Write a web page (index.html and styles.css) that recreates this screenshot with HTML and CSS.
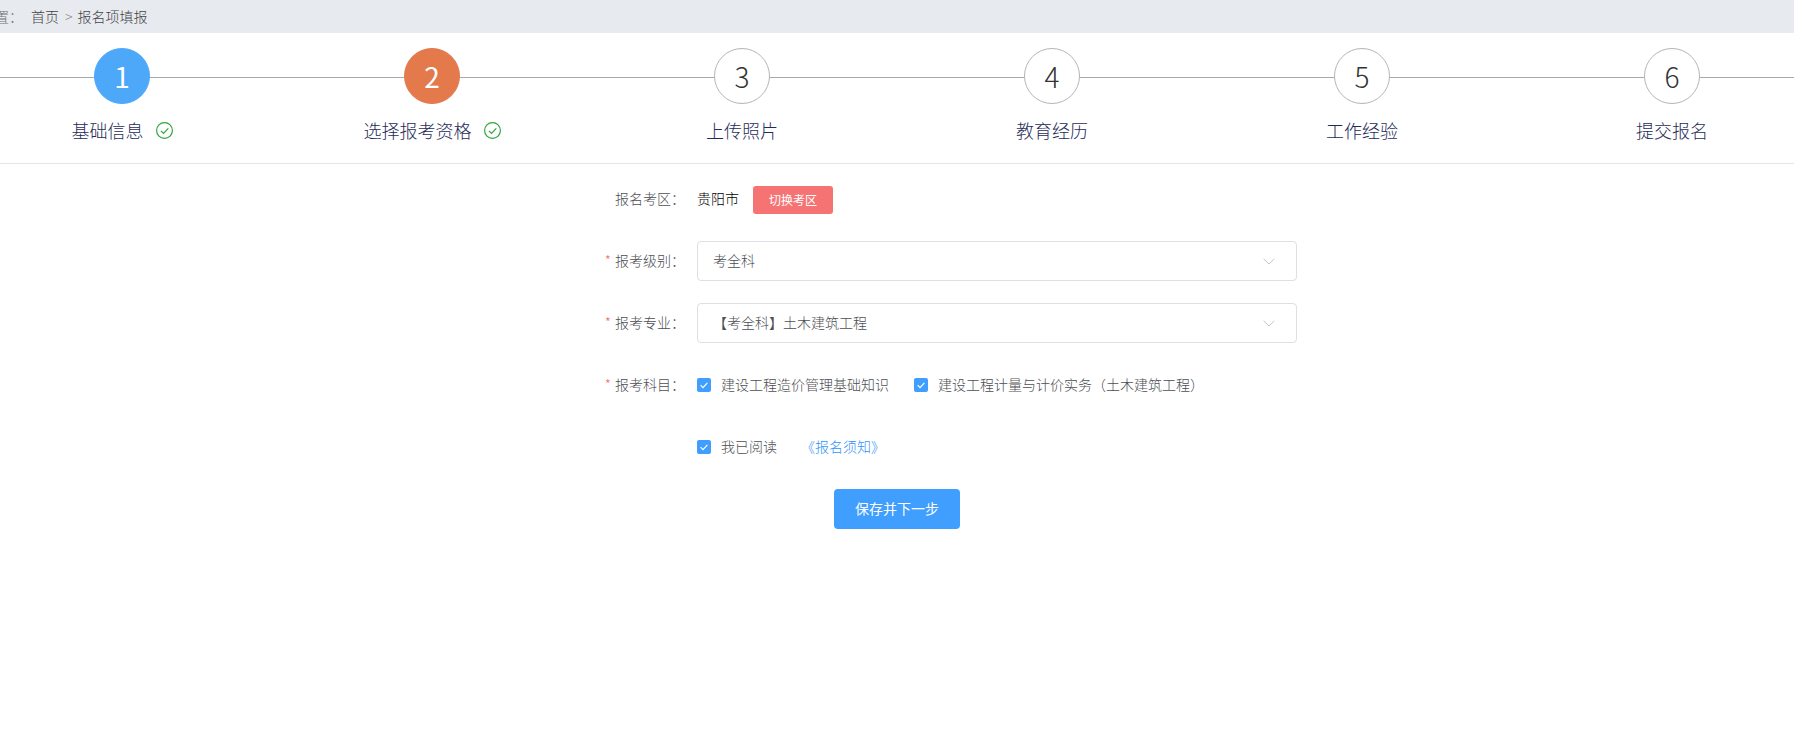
FILE: index.html
```html
<!DOCTYPE html>
<html lang="zh-CN">
<head>
<meta charset="utf-8">
<title>报名项填报</title>
<link rel="stylesheet" href="styles.css">
</head>
<body>
<div class="page">
  <nav class="crumbs">
    <span class="crumb-prefix">位置&#xFF1A;</span>
    <a class="crumb-link">首页</a>
    <span class="crumb-sep">&gt;</span>
    <span class="crumb-current">报名项填报</span>
  </nav>

  <section class="steps">
    <div class="step">
      <div class="step-num step-blue">1</div>
      <div class="step-label"><span>基础信息</span>
        <svg class="step-check" viewBox="0 0 17 17"><circle cx="8.5" cy="8.5" r="7.9"/><path d="M4.9 8.8l2.6 2.6 4.8-5"/></svg>
      </div>
    </div>
    <div class="step">
      <div class="step-num step-orange">2</div>
      <div class="step-label"><span>选择报考资格</span>
        <svg class="step-check" viewBox="0 0 17 17"><circle cx="8.5" cy="8.5" r="7.9"/><path d="M4.9 8.8l2.6 2.6 4.8-5"/></svg>
      </div>
    </div>
    <div class="step">
      <div class="step-num">3</div>
      <div class="step-label"><span>上传照片</span></div>
    </div>
    <div class="step">
      <div class="step-num">4</div>
      <div class="step-label"><span>教育经历</span></div>
    </div>
    <div class="step">
      <div class="step-num">5</div>
      <div class="step-label"><span>工作经验</span></div>
    </div>
    <div class="step">
      <div class="step-num">6</div>
      <div class="step-label"><span>提交报名</span></div>
    </div>
  </section>

  <form class="form">
    <div class="row">
      <label class="row-label">报名考区&#xFF1A;</label>
      <div class="row-body">
        <span class="area txt">贵阳市</span>
        <button type="button" class="btn-switch">切换考区</button>
      </div>
    </div>
    <div class="row">
      <label class="row-label is-required">报考级别&#xFF1A;</label>
      <div class="row-body">
        <div class="select"><span class="txt">考全科</span>
          <svg class="chevron" viewBox="0 0 12 7"><path d="M.6.8L6 6l5.4-5.2"/></svg>
        </div>
      </div>
    </div>
    <div class="row">
      <label class="row-label is-required">报考专业&#xFF1A;</label>
      <div class="row-body">
        <div class="select"><span class="txt">【考全科】土木建筑工程</span>
          <svg class="chevron" viewBox="0 0 12 7"><path d="M.6.8L6 6l5.4-5.2"/></svg>
        </div>
      </div>
    </div>
    <div class="row">
      <label class="row-label is-required">报考科目&#xFF1A;</label>
      <div class="row-body">
        <label class="check"><span class="box"><svg viewBox="0 0 14 14"><path d="M3.6 7.2l2.4 2.4 4.4-4.8"/></svg></span><span class="txt">建设工程造价管理基础知识</span></label>
        <label class="check"><span class="box"><svg viewBox="0 0 14 14"><path d="M3.6 7.2l2.4 2.4 4.4-4.8"/></svg></span><span class="txt">建设工程计量与计价实务&#xFF08;土木建筑工程&#xFF09;</span></label>
      </div>
    </div>
    <div class="row">
      <label class="row-label"></label>
      <div class="row-body">
        <label class="check check-read"><span class="box"><svg viewBox="0 0 14 14"><path d="M3.6 7.2l2.4 2.4 4.4-4.8"/></svg></span><span class="txt">我已阅读</span></label>
        <a class="notice txt">《报名须知》</a>
      </div>
    </div>
    <div class="actions">
      <button type="button" class="btn-save"><span class="txt">保存并下一步</span></button>
    </div>
  </form>
</div>
</body>
</html>
```
FILE: styles.css
```css
* { box-sizing: border-box; }
html, body { margin: 0; height: 100%; overflow: hidden; background: #fff; }
body { font-family: "Noto Sans CJK SC", "Noto Sans", sans-serif; font-size: 14px; font-weight: 300; color: #4c4e52; }
.page { width: 1860px; margin-left: -33px; }
.txt { display: block; padding-bottom: 2px; }

.crumbs { height: 33px; background: #e7eaef; display: flex; align-items: center; padding: 0 0 2px 14px; line-height: 1; }
.crumb-prefix { color: #707070; width: 50px; }
.crumb-link { color: #444; }
.crumb-sep { color: #888; margin: 0 5px 0 6px; }
.crumb-current { color: #444; }

.steps { position: relative; display: flex; height: 131px; border-bottom: 1px solid #e6e6e6; padding-top: 15px; }
.steps::before { content: ""; position: absolute; left: 0; right: 0; top: 44px; height: 1px; background: #a8a8a8; }
.step { position: relative; width: 310px; display: flex; flex-direction: column; align-items: center; }
.step-num { width: 56px; height: 56px; border-radius: 50%; border: 1px solid #b5b5b5; background: #fff; color: #333; display: flex; align-items: center; justify-content: center; font-size: 28px; line-height: 1; }
.step-blue { background: #4ea8fa; border-color: #4ea8fa; color: #fff; font-weight: 400; }
.step-orange { background: #e4794c; border-color: #e4794c; color: #fff; font-weight: 400; }
.step-label { margin-top: 13px; height: 26px; display: flex; align-items: center; gap: 12px; font-size: 18px; color: #1f2b58; line-height: 26px; white-space: nowrap; }
.step-check { width: 17px; height: 17px; fill: none; stroke: #2fa53f; stroke-width: 1.2; margin-top: 1px; }

.form { padding-top: 15px; }
.row { display: flex; margin-bottom: 22px; min-height: 40px; }
.row-label { width: 730px; padding-right: 12px; text-align: right; line-height: 38px; }
.is-required::before { content: "*"; color: #f56c6c; margin-right: 4px; }
.row-body { display: flex; align-items: center; flex: none; width: 600px; white-space: nowrap; }
.area { color: #000; }
.btn-switch { margin: 2px 0 0 14px; width: 80px; height: 28px; border: 0; border-radius: 3px; background: #f67373; color: #fff; font: inherit; font-size: 12px; font-weight: 400; padding: 0 0 1px; }
.select { width: 600px; height: 40px; border: 1px solid #dcdfe6; border-radius: 4px; padding: 0 15px; display: flex; align-items: center; justify-content: space-between; }
.chevron { width: 12px; height: 7px; fill: none; stroke: #c0c4cc; stroke-width: 1; margin-right: 6px; }
.check { display: flex; align-items: center; margin-right: 25px; }
.check-read { margin-right: 24px; }
.box { width: 14px; height: 14px; border-radius: 2px; background: #409eff; margin-right: 10px; display: block; }
.box svg { display: block; width: 14px; height: 14px; fill: none; stroke: #fff; stroke-width: 1.2; }
.notice { color: #2f93fb; }
.actions { display: flex; justify-content: center; }
.btn-save { width: 126px; height: 40px; border: 0; border-radius: 4px; background: #409eff; color: #fff; font: inherit; font-weight: 400; padding: 0; }
```
